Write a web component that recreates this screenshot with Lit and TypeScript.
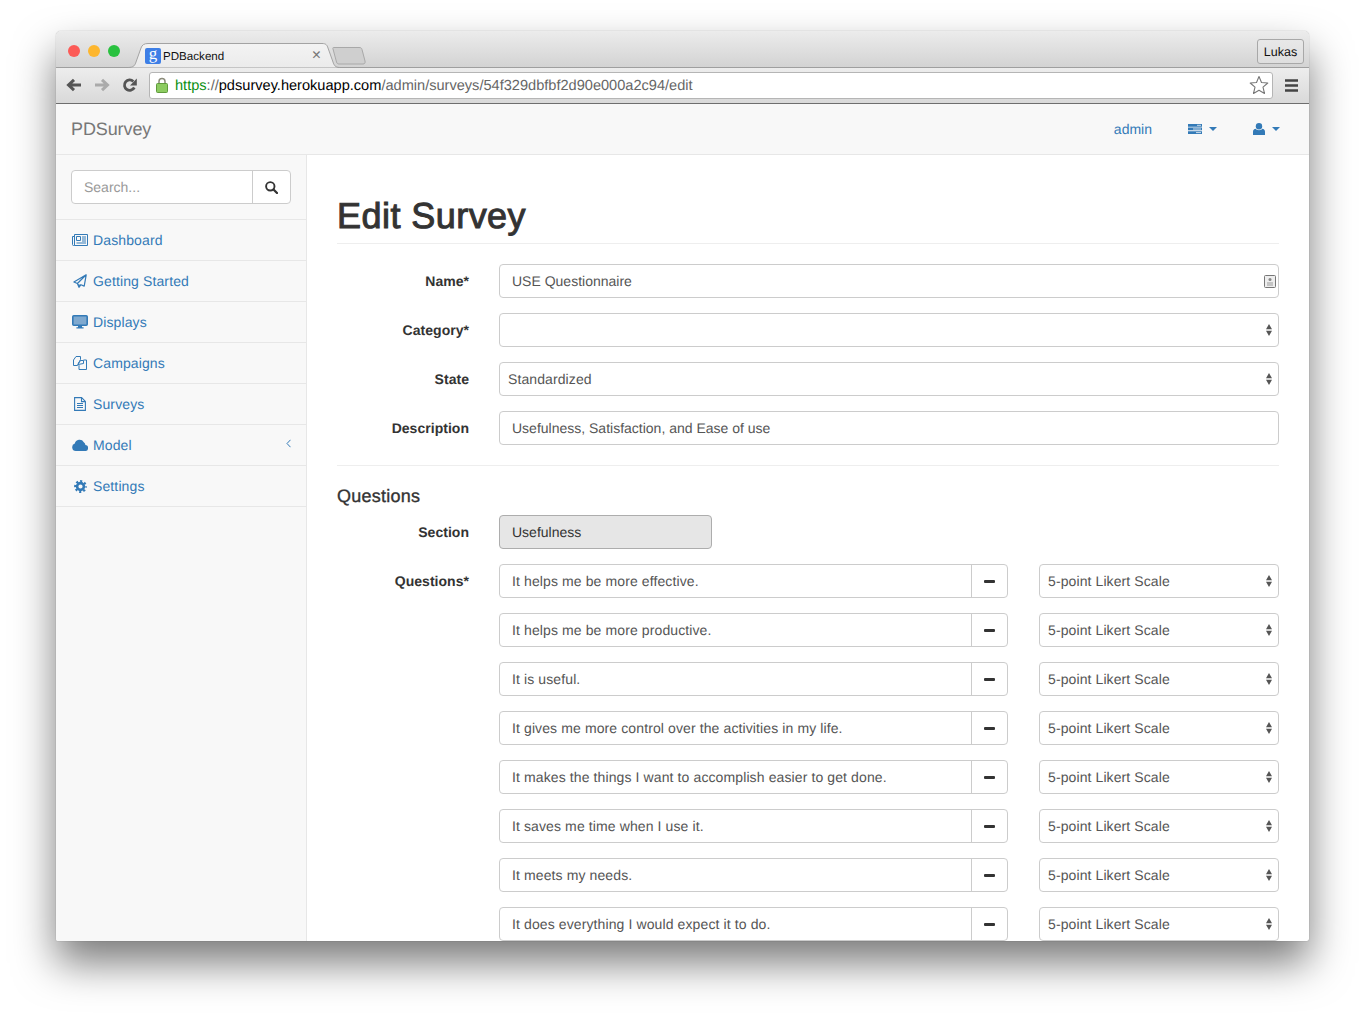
import { LitElement, html, css, svg } from 'lit';
import { customElement } from 'lit/decorators.js';

const icon = (w: number, h: number, body: unknown, cls = '') =>
  html`<svg class=${cls} width=${w} height=${h} viewBox="0 0 ${w} ${h}">${body}</svg>`;

const BLUE = '#337ab7';

const navIcons: Record<string, unknown> = {
  dashboard: icon(16, 12, svg`
    <g fill="none" stroke=${BLUE} stroke-width="1">
      <path d="M2.500.5h13v11h-13z" /><path d="M2.500 2.500H.5v8q0 1 1 1h1" />
      <path d="M4.500 2.500h4v4h-4z" />
      <path d="M10 3h4M10 5h4M10 7h4M4.500 9h9.500" />
    </g>`),
  plane: icon(14, 14, svg`
    <path d="M13.200.8 .9 8l3.500 1.500L6 13.300l1.900-2.600 3.300 1.400z M13.200.8 4.400 9.500M6 13.300V10.300"
      fill="none" stroke=${BLUE} stroke-width="1.200" stroke-linejoin="round" />`),
  desktop: icon(16, 14, svg`
    <rect x=".8" y=".8" width="14.400" height="9.400" rx="1" fill="#7fa9cf" stroke=${BLUE} stroke-width="1.600" />
    <path d="M6 10.500h4v1.700h1.600v1.300H4.400v-1.300H6z" fill=${BLUE} />`),
  files: icon(14, 14, svg`
    <g fill="#f8f8f8" stroke=${BLUE} stroke-width="1" stroke-linejoin="round">
      <path d="M3 .5h4.500v3L4.500 9.500H.5V4z" /><path d="M7 4.500h3l.5-.5h3v9.500H6V9.500L5 8z" />
      <path d="M5 8.500 7.500 4.500h3v3z" />
    </g>`),
  file: icon(12, 14, svg`
    <path d="M.6.6h7l3.800 3.800v9H.6z M7.500.6v4h3.900M3 6.500h6M3 8.500h6M3 10.500h6" fill="none" stroke=${BLUE} stroke-width="1.100" />`),
  cloud: icon(16, 12, svg`
    <path d="M3.800 12a3.800 3.800 0 0 1-1-7.400 4.900 4.900 0 0 1 9-1.400A3.200 3.200 0 0 1 13.400 6 3 3 0 0 1 12.800 12z" fill=${BLUE} />`),
  cog: icon(13, 13, svg`
    <circle cx="6.500" cy="6.500" r="3.400" fill="none" stroke=${BLUE} stroke-width="2.600" />
    <circle cx="6.500" cy="6.500" r="5.300" fill="none" stroke=${BLUE} stroke-width="2.200" stroke-dasharray="2.100 2.063" stroke-dashoffset="1" />`),
};

const sideLinks = [
  { label: 'Dashboard', icon: 'dashboard' },
  { label: 'Getting Started', icon: 'plane' },
  { label: 'Displays', icon: 'desktop' },
  { label: 'Campaigns', icon: 'files' },
  { label: 'Surveys', icon: 'file' },
  { label: 'Model', icon: 'cloud', more: true },
  { label: 'Settings', icon: 'cog' },
];

const questions = [
  'It helps me be more effective.',
  'It helps me be more productive.',
  'It is useful.',
  'It gives me more control over the activities in my life.',
  'It makes the things I want to accomplish easier to get done.',
  'It saves me time when I use it.',
  'It meets my needs.',
  'It does everything I would expect it to do.',
];

@customElement('app-root')
export class AppRoot extends LitElement {
  private arrows() {
    return icon(6, 12, svg`<path d="M3 0 6 5.300H0zM3 12 0 6.800h6z" fill="#555" />`, 'arrows');
  }

  private select(value: string) {
    return html`<div class="control select">${value}${this.arrows()}</div>`;
  }

  render() {
    return html`
      <div class="window">
        <div class="strip">
          <div class="lights">
            <i style="background:#fc5b57"></i>
            <i style="background:#fdb62e"></i>
            <i style="background:#29c13f"></i>
          </div>
          <div class="tab">
            <svg class="tab-shape" width="212" height="25" viewBox="0 0 212 25">
              <defs>
                <linearGradient id="tabfill" x1="0" y1="0" x2="0" y2="1">
                  <stop offset="0" stop-color="#f3f3f3" />
                  <stop offset="1" stop-color="#ebebeb" />
                </linearGradient>
              </defs>
              <path d="M0 24.500C6 24.500 7 22 8 19L13 5C14 2 16 .5 20 .5H194C198 .5 199 2 200 5L205 19C206 22 207 24.500 212 24.500"
                fill="url(#tabfill)" stroke="#a3a3a3" />
            </svg>
            <span class="favicon">g</span>
            <span class="tab-title">PDBackend</span>
            <span class="tab-close">×</span>
          </div>
          <svg class="newtab" width="34" height="18" viewBox="0 0 34 18">
            <path d="M1.500.5H27C29 .5 29.500 1 30 2.500L33 14C33.500 16 32.500 17 31 17H7C5.500 17 5 16.500 4.500 15L1 2C.7 1 .8.5 1.500.5z"
              fill="#cfcfcf" stroke="#a8a8a8" />
          </svg>
          <div class="profile">Lukas</div>
        </div>

        <div class="toolbar">
          ${icon(16, 14, svg`<path d="M15 7H3M8 1.800 2.500 7 8 12.200" fill="none" stroke="#555" stroke-width="3" />`)}
          ${icon(16, 14, svg`<path d="M1 7h12M8 1.800 13.500 7 8 12.200" fill="none" stroke="#aaa" stroke-width="3" />`)}
          ${icon(15, 15, svg`
            <path d="M12.300 9.500A5.200 5.200 0 1 1 11.300 3.400" fill="none" stroke="#555" stroke-width="2.800" />
            <path d="M14.800.6v6.800H8z" fill="#555" />`)}
          <div class="omnibox">
            ${icon(12, 16, svg`
              <path d="M3 7V4.500a3 3 0 0 1 6 0V7" fill="none" stroke="#8b8b7a" stroke-width="1.500" />
              <rect x=".5" y="6.500" width="11" height="9" rx="1" fill="#8ccb60" stroke="#5f9a3c" />`)}
            <span class="url"><span class="https">https</span><span class="dim">://</span><span class="host">pdsurvey.herokuapp.com</span><span class="dim">/admin/surveys/54f329dbfbf2d90e000a2c94/edit</span></span>
            ${icon(20, 20, svg`
              <path d="M10 1.500 12.500 7.500 18.800 8 14 12.200 15.500 18.500 10 15.200 4.500 18.500 6 12.200 1.200 8 7.500 7.500z"
                fill="#fff" stroke="#777" stroke-width="1.100" stroke-linejoin="round" />`)}
          </div>
          ${icon(13, 13, svg`<path d="M0 1.500h13M0 6.500h13M0 11.500h13" stroke="#444" stroke-width="2.600" />`, 'menu')}
        </div>

        <div class="navbar">
          <span class="brand">PDSurvey</span>
          <div class="nav-right">
            <a>admin</a>
            <a class="drop">
              ${icon(14, 10, svg`
                <path d="M0 0h14v2.700H0zM0 3.600h14v2.700H0zM0 7.300h14V10H0z" fill=${BLUE} />
                <path d="M9 1.300h4M5 5h8M8 8.600h5" stroke="#f8f8f8" stroke-width=".8" />`)}
              <i class="caret"></i>
            </a>
            <a class="drop">
              ${icon(12, 12, svg`
                <circle cx="6" cy="3.200" r="3.200" fill=${BLUE} />
                <path d="M0 12V8.800C0 7 1.200 6 2.500 5.800 3.500 6.800 4.700 7.200 6 7.200S8.500 6.800 9.500 5.800C10.800 6 12 7 12 8.800V12z" fill=${BLUE} />`)}
              <i class="caret"></i>
            </a>
          </div>
        </div>

        <div class="body">
          <aside class="sidebar">
            <div class="search">
              <div class="search-input">Search...</div>
              <div class="search-btn">
                ${icon(13, 13, svg`
                  <circle cx="5.300" cy="5.300" r="4.200" fill="none" stroke="#333" stroke-width="1.900" />
                  <path d="M8.500 8.500 12 12" stroke="#333" stroke-width="2.300" stroke-linecap="round" />`)}
              </div>
            </div>
            ${sideLinks.map(
              (l) => html`
                <a class="side-link">
                  <span class="side-icon">${navIcons[l.icon]}</span>
                  ${l.label}
                  ${l.more
                    ? icon(5, 9, svg`<path d="M4.500.8 1 4.500 4.500 8.200" fill="none" stroke=${BLUE} />`, 'chev')
                    : ''}
                </a>
              `,
            )}
          </aside>

          <main class="main">
            <h1>Edit Survey</h1>
            <div class="form">
              <label>Name*</label>
              <div class="control">
                USE Questionnaire
                ${icon(12, 13, svg`
                  <rect x=".5" y=".5" width="11" height="12" rx="1" fill="#eee" stroke="#777" />
                  <circle cx="6" cy="4.500" r="1.500" fill="#888" />
                  <path d="M3 7.500h6v1H3zM3 9.500h6v1H3z" fill="#999" />`, 'autofill')}
              </div>
              <label>Category*</label>
              ${this.select('')}
              <label>State</label>
              ${this.select('Standardized')}
              <label>Description</label>
              <div class="control">Usefulness, Satisfaction, and Ease of use</div>
            </div>

            <hr />
            <h4>Questions</h4>

            <div class="form">
              <label>Section</label>
              <div class="control disabled">Usefulness</div>
              ${questions.map(
                (q, i) => html`
                  <label>${i === 0 ? 'Questions*' : ''}</label>
                  <div class="question">
                    <div class="group">
                      <div class="group-input">${q}</div>
                      <div class="group-btn"><i class="minus"></i></div>
                    </div>
                    ${this.select('5-point Likert Scale')}
                  </div>
                `,
              )}
            </div>
          </main>
        </div>
      </div>
    `;
  }

  static styles = css`
    :host {
      display: block;
      height: 1021px;
      padding: 31px 56px 0;
      box-sizing: border-box;
      background: #fff;
      font-family: 'Liberation Sans', Arial, sans-serif;
      font-size: 14px;
      color: #333;
      overflow: hidden;
      text-rendering: geometricPrecision;
    }

    .window {
      width: 1253px;
      height: 910px;
      display: flex;
      flex-direction: column;
      border-radius: 5px 5px 2px 2px;
      overflow: hidden;
      background: #fff;
      box-shadow: 0 0 1px rgba(0, 0, 0, 0.45), 0 22px 42px rgba(0, 0, 0, 0.52);
    }

    .strip {
      position: relative;
      flex: 0 0 37px;
      box-sizing: border-box;
      display: flex;
      padding: 8px 5px 0 12px;
      background: linear-gradient(#ececec, #d3d3d3);
      border-bottom: 1px solid #9f9f9f;
    }

    .lights {
      display: flex;
      gap: 8px;
      padding-top: 6px;
    }

    .lights i {
      width: 12px;
      height: 12px;
      border-radius: 50%;
    }

    .tab {
      position: absolute;
      left: 72px;
      top: 12px;
      width: 212px;
      height: 25px;
      display: flex;
      align-items: center;
      box-sizing: border-box;
      padding: 0 19px 0 17px;
      font-size: 11.6px;
      color: #111;
    }

    .tab-shape {
      position: absolute;
      left: 0;
      top: 0;
    }

    .favicon {
      position: relative;
      width: 16px;
      height: 16px;
      margin-right: 2px;
      border-radius: 2px;
      background: #3e7fe6;
      color: #fff;
      font: 17px/12px 'Liberation Serif', serif;
      text-align: center;
    }

    .tab-title {
      position: relative;
      flex: 1;
      padding-top: 1px;
    }

    .tab-close {
      position: relative;
      font-size: 16px;
      color: #777;
    }

    .newtab {
      position: absolute;
      left: 276px;
      top: 16px;
    }

    .profile {
      margin-left: auto;
      width: 47px;
      height: 25px;
      box-sizing: border-box;
      border: 1px solid #a8a8a8;
      border-radius: 3px;
      background: linear-gradient(#e8e8e8, #dedede);
      font-size: 12.5px;
      line-height: 24px;
      text-align: center;
      color: #111;
    }

    .toolbar {
      flex: 0 0 36px;
      box-sizing: border-box;
      display: flex;
      align-items: center;
      gap: 12px;
      padding: 0 11px 1px 10px;
      background: linear-gradient(#ededed, #d9d9d9);
      border-bottom: 1px solid #6e6e6e;
    }

    .omnibox {
      flex: 1;
      height: 27px;
      box-sizing: border-box;
      display: flex;
      align-items: center;
      padding: 0 3px 0 6px;
      background: #fff;
      border: 1px solid #b5b5b5;
      border-radius: 3px;
    }

    .url {
      flex: 1;
      margin-left: 7px;
      padding-top: 2px;
      font-size: 14.58px;
      color: #000;
    }

    .https {
      color: #0a8f12;
    }

    .dim {
      color: #666;
    }

    .navbar {
      flex: 0 0 51px;
      box-sizing: border-box;
      display: flex;
      align-items: center;
      justify-content: space-between;
      padding: 0 29px 0 15px;
      background: #f8f8f8;
      border-bottom: 1px solid #e7e7e7;
    }

    .brand {
      font-size: 18px;
      letter-spacing: -0.1px;
      color: #777;
    }

    .nav-right {
      display: flex;
      align-items: center;
      gap: 36px;
      color: #337ab7;
    }

    .drop {
      display: flex;
      align-items: center;
      gap: 7px;
    }

    .caret {
      width: 0;
      height: 0;
      border-left: 4.5px solid transparent;
      border-right: 4.5px solid transparent;
      border-top: 4.5px solid #337ab7;
    }

    .body {
      flex: 1;
      min-height: 0;
      display: flex;
    }

    .sidebar {
      flex: 0 0 251px;
      box-sizing: border-box;
      background: #f8f8f8;
      border-right: 1px solid #e7e7e7;
    }

    .search {
      display: flex;
      height: 34px;
      margin: 15px;
      box-sizing: border-box;
      border: 1px solid #ccc;
      border-radius: 4px;
      background: #fff;
    }

    .search-input {
      flex: 1;
      padding-left: 12px;
      line-height: 32px;
      color: #999;
    }

    .search-btn {
      width: 37px;
      display: flex;
      align-items: center;
      justify-content: center;
      border-left: 1px solid #ccc;
    }

    .side-link {
      height: 41px;
      box-sizing: border-box;
      display: flex;
      align-items: center;
      padding: 0 15px 0 16px;
      border-top: 1px solid #e7e7e7;
      color: #337ab7;
      letter-spacing: 0.12px;
    }

    .side-link:last-child {
      height: 42px;
      border-bottom: 1px solid #e7e7e7;
    }

    .side-icon {
      width: 16px;
      margin-right: 5px;
      display: flex;
      justify-content: center;
    }

    .chev {
      margin-left: auto;
      margin-top: -4px;
    }

    .main {
      flex: 1;
      min-width: 0;
      padding: 41px 30px 0;
    }

    h1 {
      margin: 0 0 20px;
      padding-bottom: 7px;
      border-bottom: 1px solid #eee;
      font-size: 36px;
      line-height: 39px;
      font-weight: 400;
      letter-spacing: 0.45px;
      padding-top: 0;
      height: 40px;
      -webkit-text-stroke: 1px #333;
    }

    .form {
      display: grid;
      grid-template-columns: 132px 1fr;
      column-gap: 30px;
      row-gap: 15px;
    }

    label {
      font-weight: 700;
      text-align: right;
      line-height: 34px;
      letter-spacing: 0.03px;
    }

    .control {
      position: relative;
      height: 34px;
      box-sizing: border-box;
      padding-left: 12px;
      border: 1px solid #ccc;
      border-radius: 4px;
      background: #fff;
      color: #555;
      line-height: 32px;
    }

    .select {
      padding-left: 8px;
      letter-spacing: 0.1px;
    }

    .arrows {
      position: absolute;
      right: 6px;
      top: 10px;
    }

    .autofill {
      position: absolute;
      right: 2px;
      top: 10px;
    }

    .disabled {
      width: 213px;
      background: #e6e6e6;
      border-color: #adadad;
      color: #333;
    }

    hr {
      margin: 20px 0;
      border: 0;
      border-top: 1px solid #eee;
    }

    h4 {
      margin: 0 0 9px;
      font-size: 18px;
      line-height: 20px;
      font-weight: 400;
      letter-spacing: 0.25px;
      -webkit-text-stroke: 0.35px #333;
    }

    .question {
      display: grid;
      grid-template-columns: 509px 1fr;
      column-gap: 31px;
    }

    .group {
      display: flex;
      height: 34px;
      box-sizing: border-box;
      border: 1px solid #ccc;
      border-radius: 4px;
      background: #fff;
    }

    .group-input {
      flex: 1;
      padding-left: 12px;
      line-height: 32px;
      color: #555;
      letter-spacing: 0.11px;
    }

    .group-btn {
      width: 35px;
      display: flex;
      align-items: center;
      justify-content: center;
      border-left: 1px solid #ccc;
    }

    .minus {
      width: 11px;
      height: 3px;
      border-radius: 1px;
      background: #333;
    }
  `;
}

declare global {
  interface HTMLElementTagNameMap {
    'app-root': AppRoot;
  }
}
